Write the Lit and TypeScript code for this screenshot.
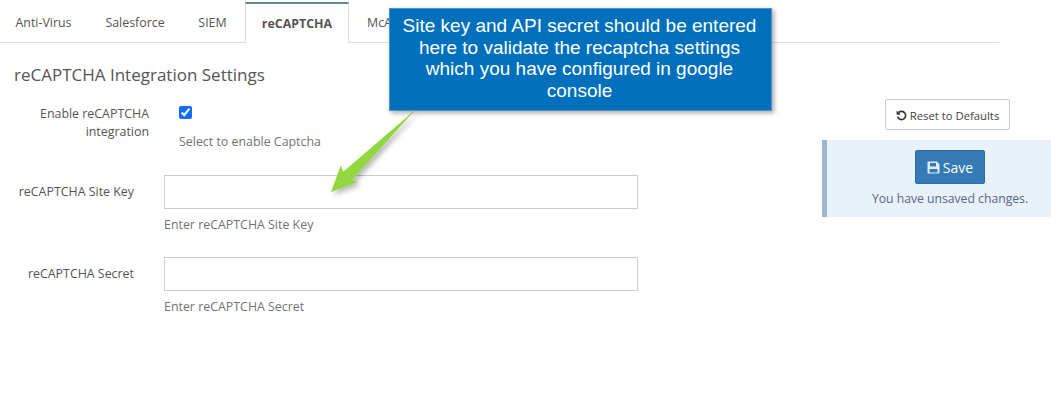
import { LitElement, html, css } from "lit";
import { customElement } from "lit/decorators.js";

@customElement("app-root")
export class AppRoot extends LitElement {
  static styles = css`
    :host { display: block; width: 1051px; height: 410px; position: relative; overflow: hidden; background: #fff; font-family: "Open Sans", sans-serif; font-size: 12.4px; color: #555; }
    .tabs { display: flex; width: 999px; height: 43px; box-sizing: border-box; border-bottom: 1px solid #ddd; padding-top: 2px; }
    .tab { height: 41px; box-sizing: border-box; display: flex; align-items: center; justify-content: center; color: #555; }
    .t1 { width: 90px; padding-right: 3px; }
    .t2 { width: 90px; }
    .t3 { width: 65px; }
    .active { width: 104px; font-weight: 700; background: #fff; border: 1px solid #ddd; border-top: 2px solid #5b8a9f; border-bottom: 0; margin-bottom: -1px; }
    .t5 { justify-content: flex-start; padding-left: 18px; width: 80px; }
    .body { display: flex; }
    .left { width: 822px; flex: none; padding-left: 15px; box-sizing: border-box; }
    h2 { margin: 21px 0 0; font-size: 17px; line-height: 22px; font-weight: 400; color: #555; margin-left: -1px; }
    .row { display: flex; }
    .lbl { width: 134px; flex: none; text-align: right; line-height: 18px; color: #555; }
    .ctl { margin-left: 15px; width: 474px; }
    .r1 { margin-top: 19px; height: 70px; }
    .r1 .ctl { padding-left: 15px; }
    .r1 input { display: block; width: 13px; height: 13px; margin: 1px 0 0; accent-color: #0d6efd; }
    .r1 .help { margin-top: 14px; }
    .r2 { margin-top: 0; }
    .r3 { margin-top: 23px; }
    .r2 .lbl, .r3 .lbl { padding-top: 8px; width: 119px; }
    .r2 .ctl, .r3 .ctl { margin-left: 30px; }
    .box { display: block; width: 474px; height: 34px; box-sizing: border-box; border: 1px solid #ccc; background: #fff; }
    .help { line-height: 18px; color: #737373; }
    .ctl > .box + .help { margin-top: 7px; }
    .right { width: 229px; flex: none; }
    .reset { margin: 56px 0 0 63px; width: 125px; height: 31px; box-sizing: border-box; border: 1px solid #ccc; border-radius: 2px; background: #fff; display: flex; align-items: center; justify-content: center; gap: 3px; color: #444; font: inherit; font-size: 11.3px; padding: 1px 0 0; }
    .panel { margin-top: 10px; height: 77px; box-sizing: border-box; border-left: 5px solid #9db6cf; background: #e9f1fb; display: flex; flex-direction: column; align-items: center; padding-top: 10px; padding-left: 22px; color: #56697d; font-size: 12.2px; }
    .save { width: 70px; height: 34px; box-sizing: border-box; border: 1px solid #2e6da4; border-radius: 2px; background: #337ab7; color: #fff; font: inherit; font-size: 14px; display: flex; align-items: center; justify-content: center; gap: 3px; padding: 0; }
    .panel p { margin: 6px 0 0; line-height: 17px; }
    .callout { position: absolute; left: 389px; top: 8px; width: 383px; height: 103px; box-sizing: border-box; background: #0070bc; border: 1px solid #4f93c9; box-shadow: 2px 2px 5px rgba(0,0,0,.35); color: #fff; font-family: "Liberation Sans", Arial, sans-serif; font-size: 19px; line-height: 21.7px; text-align: center; padding: 6px 12px 0 10px; }
    .arrow { position: absolute; left: 320px; top: 100px; overflow: visible; }
  `;

  render() {
    return html`
      <div class="tabs">
        <div class="tab t1">Anti-Virus</div>
        <div class="tab t2">Salesforce</div>
        <div class="tab t3">SIEM</div>
        <div class="tab active">reCAPTCHA</div>
        <div class="tab t5">McAfee</div>
      </div>
      <div class="body">
        <div class="left">
          <h2>reCAPTCHA Integration Settings</h2>
          <div class="row r1">
            <div class="lbl">Enable reCAPTCHA integration</div>
            <div class="ctl"><input type="checkbox" checked /><div class="help">Select to enable Captcha</div></div>
          </div>
          <div class="row r2">
            <div class="lbl">reCAPTCHA Site Key</div>
            <div class="ctl"><input class="box" type="text" /><div class="help">Enter reCAPTCHA Site Key</div></div>
          </div>
          <div class="row r3">
            <div class="lbl">reCAPTCHA Secret</div>
            <div class="ctl"><input class="box" type="text" /><div class="help">Enter reCAPTCHA Secret</div></div>
          </div>
        </div>
        <div class="right">
          <button class="reset">
            <svg width="11" height="11" viewBox="0 0 11 11" fill="none"><path d="M2.6 2.6A4.1 4.1 0 1 1 1.6 6.6" stroke="#333" stroke-width="1.6"/><path d="M.6 .6v4.2h4.2z" fill="#333"/></svg>
            Reset to Defaults
          </button>
          <div class="panel">
            <button class="save">
              <svg width="13" height="13" viewBox="0 0 13 13"><path fill="#e4edf6" fill-rule="evenodd" d="M1.5 .5h8.3l2.7 2.7v8.3a1 1 0 0 1-1 1h-10a1 1 0 0 1-1-1v-10a1 1 0 0 1 1-1zM3 2v3.5h6V2zm-.5 6v3.5h8V8z"/></svg>
              Save
            </button>
            <p>You have unsaved changes.</p>
          </div>
        </div>
      </div>
      <svg class="arrow" width="100" height="100" viewBox="0 0 100 100">
        <defs><filter id="s" x="-30%" y="-30%" width="170%" height="170%"><feDropShadow dx="3" dy="3" stdDeviation="2.5" flood-color="#000" flood-opacity=".28"/></filter></defs>
        <path d="M95 10 L23 72 L21 65 L11 92 L38 82 L32 80 Z" fill="#92d63f" filter="url(#s)"/>
      </svg>
      <div class="callout">Site key and API secret should be entered here to validate the recaptcha settings which you have configured in google console</div>
    `;
  }
}
